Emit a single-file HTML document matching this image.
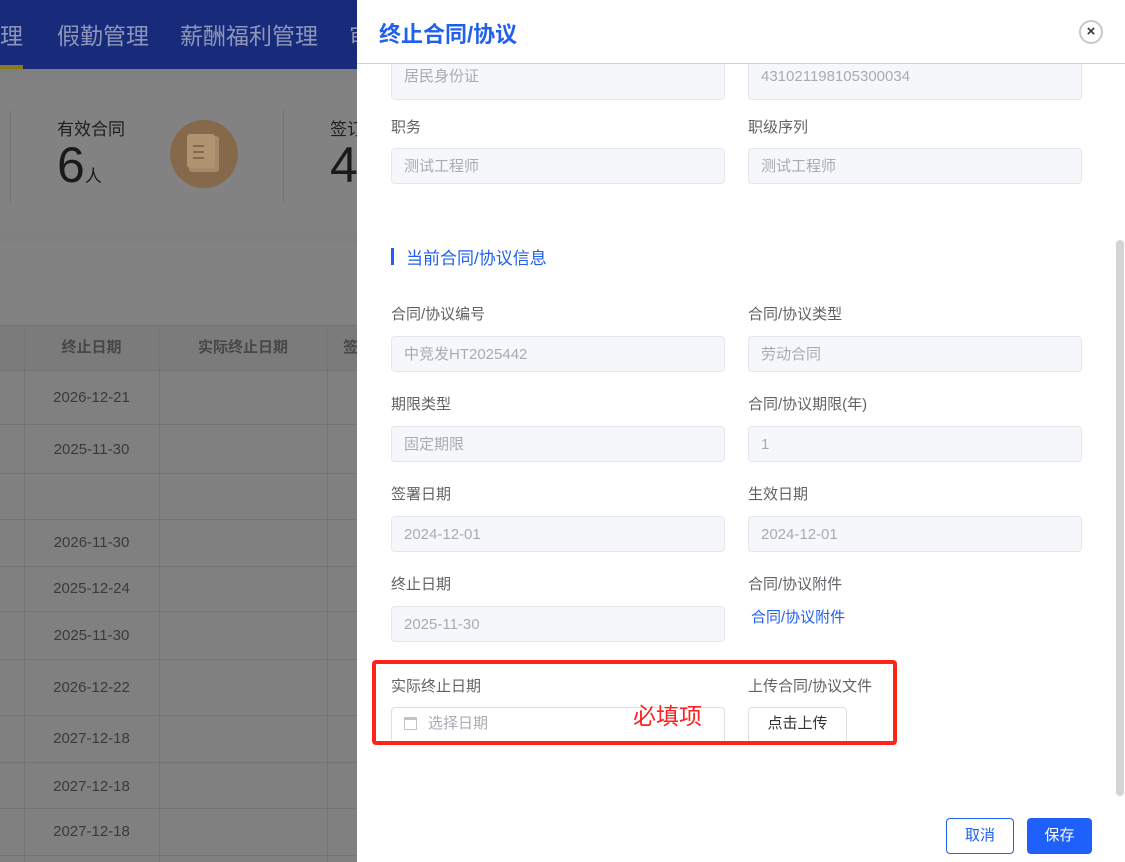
<!DOCTYPE html><html><head><meta charset="utf-8"><style>
*{margin:0;padding:0;box-sizing:border-box}
body{width:1125px;height:862px;overflow:hidden;position:relative;font-family:"Liberation Sans","Noto Sans CJK SC",sans-serif;background:#808080}
.nav{position:absolute;left:0;top:0;width:357px;height:69px;background:#182a7a;color:#8d96b8;font-size:23px}
.nav span{position:absolute;top:17px}
.ab{position:absolute}
.lbl{position:absolute;font-size:15px;color:#606266}
.inp{position:absolute;height:36px;width:334px;background:#f5f7fa;border:1px solid #e4e7ed;border-radius:4px;color:#a8abb2;font-size:15px;padding:0 12px;line-height:34px}
.d{position:absolute;left:24px;width:135px;text-align:center;font-size:15px;color:#3a3a3a}
.hl{position:absolute;left:0;width:357px;height:1px;background:#747474}
</style></head><body>
<div class="nav"><span style="left:0">理</span><span style="left:57px">假勤管理</span><span style="left:180px">薪酬福利管理</span><span style="left:349px">审</span></div>
<div class="ab" style="left:0;top:65px;width:23px;height:4px;background:#8a7a1e"></div>
<div class="ab" style="left:0;top:80px;width:357px;height:153px;background:#828282"></div>
<div class="ab" style="left:10px;top:110px;width:1px;height:93px;background:#747474"></div>
<div class="ab" style="left:283px;top:110px;width:1px;height:93px;background:#747474"></div>
<div class="ab" style="left:57px;top:115px;font-size:17px;color:#1e1e1e">有效合同</div>
<div class="ab" style="left:57px;top:136px;font-size:50px;color:#1a1a1a;line-height:58px">6<span style="font-size:17px">人</span></div>
<div class="ab" style="left:330px;top:115px;font-size:17px;color:#1e1e1e">签订</div>
<div class="ab" style="left:330px;top:136px;font-size:50px;color:#1a1a1a;line-height:58px">4</div>
<div class="ab" style="left:170px;top:120px;width:68px;height:68px;border-radius:50%;background:#85694a"></div>
<div class="ab" style="left:189px;top:136px;width:30px;height:36px;border-radius:3px;border:2px solid #a68a68;background:#a38a6c"></div>
<div class="ab" style="left:187px;top:134px;width:28px;height:34px;border-radius:3px;background:#b09472"></div>
<div class="ab" style="left:193px;top:145px;width:11px;height:2px;background:#85694a;box-shadow:0 6px 0 #85694a,0 12px 0 #85694a"></div>
<div class="ab" style="left:0;top:244px;width:357px;height:80px;background:#828282"></div>
<div class="ab" style="left:0;top:325px;width:357px;height:45px;background:#7b7b7b;border-top:1px solid #747474"></div>
<div class="ab" style="left:24px;top:325px;width:1px;height:537px;background:#747474"></div>
<div class="ab" style="left:159px;top:325px;width:1px;height:537px;background:#747474"></div>
<div class="ab" style="left:327px;top:325px;width:1px;height:537px;background:#747474"></div>
<div class="ab" style="left:24px;top:336px;width:135px;text-align:center;font-size:15px;font-weight:bold;color:#474747">终止日期</div>
<div class="ab" style="left:159px;top:336px;width:168px;text-align:center;font-size:15px;font-weight:bold;color:#474747">实际终止日期</div>
<div class="ab" style="left:343px;top:336px;font-size:15px;font-weight:bold;color:#474747">签</div>
<div class="hl" style="top:370px"></div><div class="hl" style="top:424px"></div><div class="hl" style="top:473px"></div><div class="hl" style="top:519px"></div><div class="hl" style="top:566px"></div><div class="hl" style="top:611px"></div><div class="hl" style="top:659px"></div><div class="hl" style="top:715px"></div><div class="hl" style="top:762px"></div><div class="hl" style="top:808px"></div><div class="hl" style="top:855px"></div>
<div class="d" style="top:389px">2026-12-21</div><div class="d" style="top:441px">2025-11-30</div><div class="d" style="top:534px">2026-11-30</div><div class="d" style="top:580px">2025-12-24</div><div class="d" style="top:627px">2025-11-30</div><div class="d" style="top:679px">2026-12-22</div><div class="d" style="top:730px">2027-12-18</div><div class="d" style="top:778px">2027-12-18</div><div class="d" style="top:823px">2027-12-18</div>

<div class="ab" style="left:357px;top:0;width:768px;height:862px;background:#fff"></div>
<div class="ab" style="left:357px;top:63px;width:768px;height:1px;background:#d0d0d0"></div>
<div class="ab" style="left:379px;top:17px;font-size:22px;font-weight:bold;color:#2060f0">终止合同/协议</div>
<div class="ab" style="left:1079px;top:20px;width:24px;height:24px;border-radius:50%;border:2px solid #c8c8c8;text-align:center;line-height:19px;font-size:15px;font-weight:bold;color:#333">×</div>
<div class="ab" style="left:1116px;top:240px;width:8px;height:556px;border-radius:4px;background:#d4d4d4"></div>
<div class="inp" style="left:391px;top:64px;border-top:none;border-radius:0 0 4px 4px;line-height:26px">居民身份证</div>
<div class="inp" style="left:748px;top:64px;border-top:none;border-radius:0 0 4px 4px;line-height:26px">431021198105300034</div>
<div class="lbl" style="left:391px;top:116px">职务</div><div class="lbl" style="left:748px;top:116px">职级序列</div>
<div class="inp" style="left:391px;top:148px;line-height:36px">测试工程师</div><div class="inp" style="left:748px;top:148px;line-height:36px">测试工程师</div>
<div class="ab" style="left:391px;top:248px;width:3px;height:17px;background:#2060f0"></div>
<div class="ab" style="left:406px;top:244px;font-size:17px;color:#2060f0">当前合同/协议信息</div>
<div class="lbl" style="left:391px;top:303px">合同/协议编号</div><div class="lbl" style="left:748px;top:303px">合同/协议类型</div>
<div class="inp" style="left:391px;top:336px;line-height:36px">中竞发HT2025442</div><div class="inp" style="left:748px;top:336px;line-height:36px">劳动合同</div>
<div class="lbl" style="left:391px;top:393px">期限类型</div><div class="lbl" style="left:748px;top:393px">合同/协议期限(年)</div>
<div class="inp" style="left:391px;top:426px;line-height:36px">固定期限</div><div class="inp" style="left:748px;top:426px;line-height:36px">1</div>
<div class="lbl" style="left:391px;top:483px">签署日期</div><div class="lbl" style="left:748px;top:483px">生效日期</div>
<div class="inp" style="left:391px;top:516px;line-height:36px">2024-12-01</div><div class="inp" style="left:748px;top:516px;line-height:36px">2024-12-01</div>
<div class="lbl" style="left:391px;top:573px">终止日期</div><div class="lbl" style="left:748px;top:573px">合同/协议附件</div>
<div class="inp" style="left:391px;top:606px;line-height:36px">2025-11-30</div>
<div class="ab" style="left:751px;top:606px;font-size:15px;color:#2060f0">合同/协议附件</div>
<div class="lbl" style="left:391px;top:675px">实际终止日期</div><div class="lbl" style="left:748px;top:675px">上传合同/协议文件</div>
<div class="inp" style="left:391px;top:707px;background:#fff;border-color:#dcdfe6;padding-left:36px;color:#a8abb2;line-height:32px">选择日期</div>
<div class="ab" style="left:404px;top:717px;width:13px;height:13px;border:1px solid #c0c3ca;border-top-width:3px"></div>
<div class="ab" style="left:748px;top:707px;width:99px;height:36px;border:1px solid #dcdfe6;border-radius:4px;font-size:15px;color:#333;text-align:center;line-height:32px">点击上传</div>
<div class="ab" style="left:633px;top:697px;font-size:23px;color:#ff2020">必填项</div>
<div class="ab" style="left:372px;top:660px;width:525px;height:85px;border:4px solid #ff2318;border-radius:4px"></div>
<div class="ab" style="left:946px;top:818px;width:68px;height:36px;border:1px solid #2060f0;border-radius:4px;color:#2060f0;font-size:15px;text-align:center;line-height:34px">取消</div>
<div class="ab" style="left:1027px;top:818px;width:65px;height:36px;background:#1f5ffa;border-radius:4px;color:#fff;font-size:15px;text-align:center;line-height:36px">保存</div>
</body></html>
